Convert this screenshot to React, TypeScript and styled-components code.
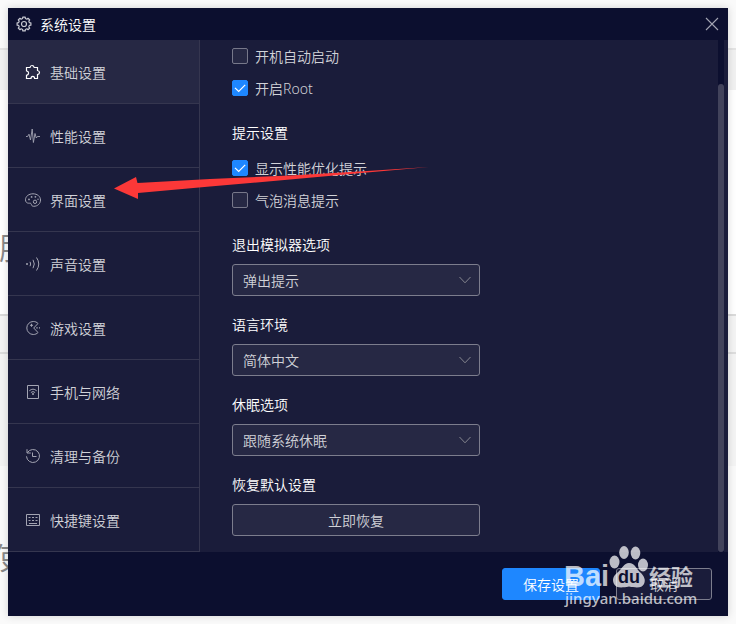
import React, { useState } from "react";
import styled, { createGlobalStyle } from "styled-components";

const GlobalStyle = createGlobalStyle`
  *, *::before, *::after { box-sizing: border-box; }
  body { margin: 0; }
  body, button, select, input {
    font-family: "Noto Sans", "Noto Sans CJK SC", sans-serif;
    font-size: 14px;
    font-weight: 350;
  }
`;

const Page = styled.div`
  position: relative;
  display: flex;
  min-height: 100vh;
  padding: 8px;
  overflow: hidden;
  background: linear-gradient(
    #fafafa 0 48px, #e4e4e4 48px 50px, #f1f1f1 50px 90px,
    #ffffff 90px 314px, #dadada 314px 316px, #f4f4f4 316px 352px,
    #dddddd 352px 354px, #f4f4f4 354px 466px, #fafafa 466px
  );
`;

const BackdropText = styled.span<{ $top: number; $left: number }>`
  position: absolute;
  top: ${(p) => p.$top}px;
  left: ${(p) => p.$left}px;
  font-size: 30px;
  line-height: 32px;
  font-weight: 400;
  color: #888;
`;

const Dialog = styled.main`
  position: relative;
  flex: 1;
  min-width: 0;
  display: flex;
  flex-direction: column;
  background: #0c0f2f;
  box-shadow: 0 0 8px rgba(0, 0, 0, 0.16);
`;

const TitleBar = styled.header`
  display: flex;
  align-items: center;
  gap: 8px;
  height: 32px;
  padding: 0 8px;
  color: #fff;
`;

const Title = styled.h1`
  flex: 1;
  margin: 0;
  padding-top: 2px;
  font-size: 14px;
  line-height: 24px;
  font-weight: 350;
`;

const CloseButton = styled.button`
  display: grid;
  place-items: center;
  width: 16px;
  height: 16px;
  padding: 0;
  border: 0;
  background: none;
  color: #a3a4b2;
`;

const Body = styled.div`
  flex: 1;
  display: flex;
  background: #1a1c3a;
`;

const Sidebar = styled.nav`
  width: 192px;
  flex: none;
  border-right: 1px solid #35364f;
`;

const NavItem = styled.button<{ $active: boolean }>`
  display: flex;
  align-items: center;
  gap: 8px;
  width: 100%;
  height: 64px;
  padding: 2px 16px 0;
  border: 0;
  border-bottom: 1px solid #35364f;
  background: ${(p) => (p.$active ? "#262844" : "transparent")};
  color: #d1d2d8;
  line-height: 24px;
  text-align: left;

  svg {
    margin-bottom: 1px;
    color: ${(p) => (p.$active ? "#fff" : "#a3a4b2")};
  }
`;

const Content = styled.section`
  flex: 1;
  min-width: 0;
  display: flex;
  flex-direction: column;
  gap: 16px;
  padding: 0 32px 16px;
`;

const Group = styled.div`
  width: 100%;
  max-width: 248px;
`;

const Heading = styled.div`
  height: 24px;
  margin-bottom: 8px;
  padding-top: 1px;
  line-height: 24px;
  color: #fff;
`;

const FieldLabel = styled.label`
  display: block;
  height: 24px;
  margin-bottom: 8px;
  padding-top: 1px;
  line-height: 24px;
  color: #fff;
`;

const CheckRow = styled.label`
  display: flex;
  align-items: center;
  gap: 7px;
  height: 32px;
  line-height: 24px;
  color: #d1d2d8;
`;

const CheckText = styled.span`
  padding-top: 2px;
`;

const Stack = styled.span`
  display: grid;
  align-items: center;

  > * { grid-area: 1 / 1; }
  > svg { pointer-events: none; }
`;

const Box = styled.input`
  appearance: none;
  width: 16px;
  height: 16px;
  margin: 0;
  border: 1px solid #77788a;
  border-radius: 2px;
  background: #262844;

  &:checked { border-color: #1e87ff; background: #1e87ff; }
  & + svg { visibility: hidden; }
  &:checked + svg { visibility: visible; }
`;

const SelectBox = styled.select`
  appearance: none;
  width: 100%;
  height: 32px;
  padding: 1px 32px 0 10px;
  border: 1px solid #7c7d8d;
  border-radius: 3px;
  background: #262844;
  color: #d1d2d8;
`;

const Chevron = styled.svg`
  justify-self: end;
  margin-right: 8px;
  color: #85868f;
`;

const Button = styled.button<{ $primary?: boolean; $wide?: boolean }>`
  width: ${(p) => (p.$wide ? "100%" : "auto")};
  min-width: 96px;
  height: 32px;
  padding: 0 20px;
  border: 1px solid ${(p) => (p.$primary ? "#1e87ff" : "#7c7d8d")};
  border-radius: 3px;
  background: ${(p) => (p.$primary ? "#1e87ff" : p.$wide ? "#262844" : "#1a1c3a")};
  color: ${(p) => (p.$primary ? "#fff" : "#d1d2d8")};
`;

const ScrollTrack = styled.div`
  width: 6px;
  margin-right: 4px;
  padding-top: 44px;
  display: flex;
  background: #0c0f2f;
`;

const ScrollThumb = styled.div`
  flex: 1;
  border-radius: 3px;
  background: #42435b;
`;

const Footer = styled.footer`
  display: flex;
  justify-content: flex-end;
  gap: 16px;
  padding: 16px;
`;

const Arrow = styled.svg`
  position: absolute;
  top: 156px;
  left: 104px;
  pointer-events: none;
`;

const Watermark = styled.svg`
  position: absolute;
  right: 24px;
  bottom: 4px;
  pointer-events: none;
`;

type IconProps = { children: React.ReactNode; size?: number };

const Icon = ({ children, size = 18 }: IconProps) => (
  <svg
    width={size}
    height={size}
    viewBox={`0 0 ${size} ${size}`}
    fill="none"
    stroke="currentColor"
    aria-hidden="true"
  >
    {children}
  </svg>
);

const gearPoints = Array.from({ length: 8 }, (_, i) => {
  const at = (deg: number, r: number) => {
    const a = ((i * 45 + deg) * Math.PI) / 180;
    return `${(8 + r * Math.cos(a)).toFixed(2)} ${(8 + r * Math.sin(a)).toFixed(2)}`;
  };
  return `${at(-14, 5.6)} L${at(-10, 7)} L${at(10, 7)} L${at(14, 5.6)}`;
}).join(" L");

const GearIcon = () => (
  <Icon size={16}>
    <g stroke="#c8c9d2">
      <path d={`M${gearPoints} Z`} strokeLinejoin="round" strokeWidth="1.2" />
      <circle cx="8" cy="8" r="2.5" strokeWidth="1.2" />
    </g>
  </Icon>
);

const navItems: { label: string; icon: React.ReactNode }[] = [
  {
    label: "基础设置",
    icon: (
      <path
        d="M2.5 4.5H6C6.2 3 7 2.5 8 2.5S9.9 3 10.2 4.5H13.5V7.5C15 7.8 15.5 8.6 15.5 9.5S15 11.3 13.5 11.6V15.5H10.6C10.6 14 9.8 13.3 8.8 13.3S7 14 7 15.5H2.5V12.3C4 12 4.6 11 4.6 10S4 8 2.5 7.8Z"
        strokeWidth="1.2"
      />
    ),
  },
  {
    label: "性能设置",
    icon: <path d="M2 9.5H3.6L5 7.2L6.5 13L8.2 2L9.4 15.5L11 6.5L12.3 11L13.4 9.5H16" strokeWidth=".9" />,
  },
  {
    label: "界面设置",
    icon: (
      <>
        <path d="M9 2.8C4.8 2.8 1.5 5.3 1.5 8.8C1.5 11 2.9 12.2 4.7 12.2C6.2 12.2 7 12 7.3 13.3C7.6 14.6 8.2 15.3 9.7 15.3C13.8 15.3 16.5 12.5 16.5 9C16.5 5.4 13.3 2.8 9 2.8Z" />
        <circle cx="11" cy="10.8" r="1.7" />
        <g fill="currentColor" stroke="none">
          <circle cx="5" cy="8.4" r=".9" />
          <circle cx="7.6" cy="5.9" r=".9" />
          <circle cx="11.4" cy="5.8" r=".9" />
          <circle cx="14" cy="8.2" r=".7" />
        </g>
      </>
    ),
  },
  {
    label: "声音设置",
    icon: (
      <>
        <circle cx="3" cy="9" r="1" fill="currentColor" stroke="none" />
        <path d="M6 6.8Q7.4 9 6 11.2M9 4.8Q11.6 9 9 13.2M12.5 2.5Q17 9 12.5 15.5" />
      </>
    ),
  },
  {
    label: "游戏设置",
    icon: (
      <>
        <path d="M14 4.5C12.9 3.2 11.2 2.5 9.3 2.5A6.5 6.5 0 1 0 9.3 15.5C11.2 15.5 12.9 14.8 14 13.5L9.7 9Z" />
        <path d="M7.5 4.8V7.8M6 6.3H9" />
        <path d="M12.3 8.2h1.4v1.4h-1.4zM15 8.2h1v1.4h-1z" fill="currentColor" stroke="none" />
      </>
    ),
  },
  {
    label: "手机与网络",
    icon: (
      <>
        <path d="M3.5 2.5H14.5V15.5H3.5Z" />
        <path d="M5.3 7.8Q9 4.5 12.7 7.8M6.9 9.5Q9 7.6 11.1 9.5" />
        <circle cx="9" cy="11" r="1" fill="currentColor" stroke="none" />
      </>
    ),
  },
  {
    label: "清理与备份",
    icon: (
      <>
        <path d="M3.4 5.7A6.5 6.5 0 1 1 2.5 9.3" />
        <path d="M3 2.2V6H6.8M8.5 5.5V9.5H12.5" />
      </>
    ),
  },
  {
    label: "快捷键设置",
    icon: (
      <>
        <path d="M2.5 3.5H15.5V14.5H2.5Z" />
        <path d="M4.5 6.5H13.5M4.5 9.5H13.5" strokeDasharray="2 1.5" />
        <path d="M5 12.5H13" />
      </>
    ),
  },
];

const CheckOption = ({ label, on = false }: { label: string; on?: boolean }) => (
  <CheckRow>
    <Stack>
      <Box type="checkbox" defaultChecked={on} />
      <svg width="16" height="16" viewBox="0 0 16 16" fill="none" stroke="#fff" strokeWidth="1.2" aria-hidden="true">
        <path d="M3 7.8L6.7 11.5L13.2 4.8" />
      </svg>
    </Stack>
    <CheckText>{label}</CheckText>
  </CheckRow>
);

const SelectField = ({ id, label, value }: { id: string; label: string; value: string }) => (
  <Group>
    <FieldLabel htmlFor={id}>{label}</FieldLabel>
    <Stack>
      <SelectBox id={id} defaultValue={value}>
        <option>{value}</option>
      </SelectBox>
      <Chevron width="14" height="10" viewBox="0 0 14 10" fill="none" stroke="currentColor" aria-hidden="true">
        <path d="M1.5 2L7 7.8L12.5 2" />
      </Chevron>
    </Stack>
  </Group>
);

export default function App() {
  const [active, setActive] = useState(0);
  return (
    <>
      <GlobalStyle />
      <Page>
        <BackdropText $top={232} $left={-1}>服</BackdropText>
        <BackdropText $top={542} $left={-8}>使</BackdropText>
        <Dialog>
          <TitleBar>
            <GearIcon />
            <Title>系统设置</Title>
            <CloseButton aria-label="关闭">
              <Icon size={14}>
                <path d="M1 1L13 13M13 1L1 13" strokeWidth="1.1" />
              </Icon>
            </CloseButton>
          </TitleBar>
          <Body>
            <Sidebar>
              {navItems.map((item, i) => (
                <NavItem key={item.label} $active={i === active} onClick={() => setActive(i)}>
                  <Icon>{item.icon}</Icon>
                  {item.label}
                </NavItem>
              ))}
            </Sidebar>
            <Content>
              <Group>
                <CheckOption label="开机自动启动" />
                <CheckOption label="开启Root" on />
              </Group>
              <Group>
                <Heading>提示设置</Heading>
                <CheckOption label="显示性能优化提示" on />
                <CheckOption label="气泡消息提示" />
              </Group>
              <SelectField id="exit" label="退出模拟器选项" value="弹出提示" />
              <SelectField id="language" label="语言环境" value="简体中文" />
              <SelectField id="sleep" label="休眠选项" value="跟随系统休眠" />
              <Group>
                <Heading>恢复默认设置</Heading>
                <Button $wide>立即恢复</Button>
              </Group>
            </Content>
            <ScrollTrack>
              <ScrollThumb />
            </ScrollTrack>
          </Body>
          <Footer>
            <Button $primary>保存设置</Button>
            <Button>取消</Button>
          </Footer>
          <Arrow width="320" height="48" viewBox="0 0 320 48" aria-hidden="true">
            <path
              d="M2 24.500L24 13L25.500 19L98 15L178 11.500L255 7L317 3L255 8.500L178 15.500L98 22.500L26 29V35Z"
              fill="#fb3838"
            />
          </Arrow>
          <Watermark width="140" height="72" viewBox="0 0 140 72" fill="#fff" fillOpacity=".72">
            <text x="0" y="46" fontFamily="Liberation Sans, sans-serif" fontSize="29" fontWeight="700">Bai</text>
            <g>
              <ellipse cx="50.5" cy="22" rx="5" ry="6.5" />
              <ellipse cx="60" cy="12.5" rx="4.8" ry="6.5" />
              <ellipse cx="71.5" cy="13" rx="4.8" ry="6.5" />
              <ellipse cx="79" cy="25" rx="5" ry="6.5" />
              <path d="M65 23C60 23 58 29 53 33C49 36 48 40 50 44C52 48 57 48 65 46.5C73 48 78 48 80 44C82 40 80 36 77 33C72 29 71 23 65 23Z" />
            </g>
            <text x="54" y="43" fontFamily="Liberation Sans, sans-serif" fontSize="18" fontWeight="700" fill="#0c0f2f" fillOpacity="1">du</text>
            <text x="85" y="45" fontFamily="Noto Sans CJK SC, sans-serif" fontSize="22" fontWeight="700">经验</text>
            <text x="1" y="64" fontFamily="Noto Sans, sans-serif" fontSize="15" fontWeight="500">jingyan.baidu.com</text>
          </Watermark>
        </Dialog>
      </Page>
    </>
  );
}
